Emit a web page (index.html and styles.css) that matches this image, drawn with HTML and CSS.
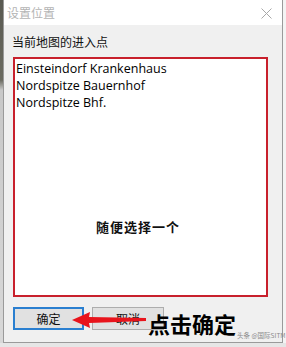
FILE: index.html
```html
<!DOCTYPE html>
<html lang="zh">
<head>
<meta charset="utf-8">
<link rel="stylesheet" href="styles.css">
</head>
<body>
<div class="screen">
  <div class="edge edge-left"></div>
  <div class="dialog">
    <div class="titlebar">
      <span class="title">设置位置</span>
      <svg class="close" width="11" height="11" viewBox="0 0 11 11"><path d="M0.5 0.5 L10.5 10.5 M10.5 0.5 L0.5 10.5" stroke="#a8a8a8" stroke-width="1" fill="none"/></svg>
    </div>
    <div class="body">
      <div class="label">当前地图的进入点</div>
      <div class="listbox">
        <div class="item">Einsteindorf Krankenhaus</div>
        <div class="item">Nordspitze Bauernhof</div>
        <div class="item">Nordspitze Bhf.</div>
        <div class="note">随便选择一个</div>
      </div>
      <div class="buttons">
        <button class="btn btn-default">确定</button>
        <button class="btn">取消</button>
      </div>
    </div>
  </div>
  <div class="edge edge-right"></div>
  <svg class="arrow" width="80" height="20" viewBox="0 0 80 20"><path d="M0 9 L18 1 L17 6 L74 7 L74 10 L17 12 L18 17 Z" fill="#e8141c"/></svg>
  <div class="callout">点击确定</div>
  <div class="watermark">头条 @国际SITM</div>
</div>
</body>
</html>
```
FILE: styles.css
```css
html, body {
  margin: 0;
  padding: 0;
  background: #e6e6e6;
}
.screen {
  position: relative;
  width: 286px;
  height: 347px;
  display: flex;
  overflow: hidden;
  font-family: "Noto Sans CJK SC", "Noto Sans", sans-serif;
}
.edge {
  width: 3px;
  height: 343px;
}
.edge-left {
  background: linear-gradient(#5a5a52 0, #6a6a60 80px, #c8c8c8 90px, #d8d8d8 100%);
}
.edge-right {
  background: #f4f4f4;
}
.dialog {
  width: 278px;
  height: 342px;
  border: 1px solid #9a9a9a;
  border-top: none;
  background: #f0f0f0;
  display: flex;
  flex-direction: column;
}
.titlebar {
  height: 25px;
  background: #ffffff;
  display: flex;
  align-items: center;
  justify-content: space-between;
  padding: 0 10px 0 3px;
}
.title {
  font-size: 12px;
  color: #b4b4b4;
  line-height: 16px;
}
.close {
  margin-top: 1px;
}
.body {
  padding: 9px 0 0 9px;
  display: flex;
  flex-direction: column;
}
.label {
  font-size: 12px;
  line-height: 16px;
  color: #111;
  margin-left: -1px;
}
.listbox {
  position: relative;
  margin-top: 7px;
  width: 250px;
  height: 235px;
  border: 2px solid #c8202c;
  background: #ffffff;
  padding-top: 1px;
  padding-left: 1px;
}
.item {
  font-family: "Open Sans", "Noto Sans", sans-serif;
  font-size: 12.5px;
  line-height: 17px;
  color: #000;
}
.note {
  position: absolute;
  left: 81px;
  top: 158px;
  font-size: 13px;
  font-weight: bold;
  letter-spacing: 1px;
  color: #111;
}
.buttons {
  display: flex;
  gap: 8px;
  margin-top: 10px;
}
.btn {
  width: 72px;
  height: 23px;
  border: 1px solid #adadad;
  background: #e1e1e1;
  font-family: "Noto Sans CJK SC", sans-serif;
  font-size: 12px;
  color: #111;
  padding: 0;
  margin: 0;
}
.btn-default {
  width: 71px;
  border: 2px solid #2a7fd0;
}
.arrow {
  position: absolute;
  left: 72px;
  top: 311px;
}
.callout {
  position: absolute;
  left: 148px;
  top: 313px;
  font-size: 22px;
  line-height: 20px;
  font-weight: bold;
  color: #000;
}
.watermark {
  position: absolute;
  left: 237px;
  top: 331px;
  font-size: 6.5px;
  line-height: 8px;
  color: #8a8a8a;
}
```
